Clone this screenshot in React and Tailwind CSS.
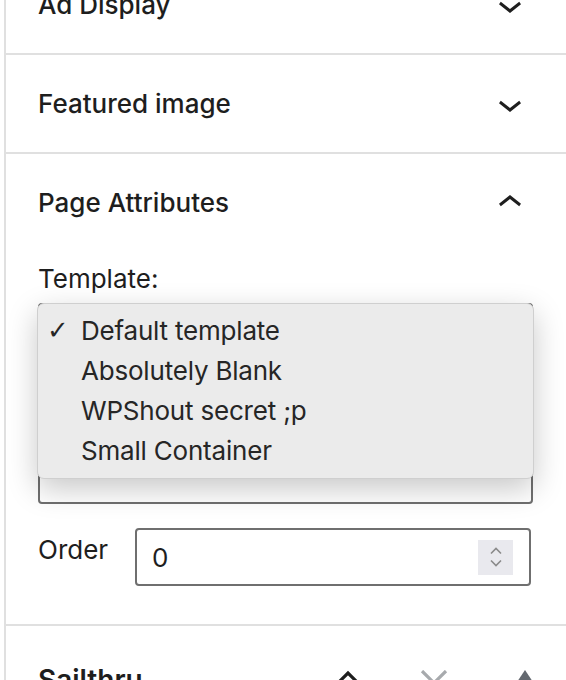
import React from "react";

function ChevronDown() {
  return (
    <svg viewBox="0 0 24 24" width="48" height="48" className="fill-[#1e1e1e]">
      <path d="M17.5 11.6L12 16l-5.5-4.4.9-1.2L12 14l4.6-3.6z" />
    </svg>
  );
}

function ChevronUp() {
  return (
    <svg viewBox="0 0 24 24" width="48" height="48" className="fill-[#1e1e1e]">
      <path d="M6.5 12.4L12 8l5.5 4.4-.9 1.2L12 10l-4.6 3.6-.9-1.2z" />
    </svg>
  );
}

function PanelHeader({ title, open }) {
  return (
    <div className="flex items-center justify-between h-[97px] pl-[32px] pr-[32px]">
      <h2 className="text-[26px] font-medium leading-none">{title}</h2>
      {open ? <ChevronUp /> : <ChevronDown />}
    </div>
  );
}

const templates = [
  "Default template",
  "Absolutely Blank",
  "WPShout secret ;p",
  "Small Container",
];

export default function App() {
  return (
    <div className="flex w-[566px] h-[680px] overflow-hidden bg-white text-[#1e1e1e] font-['Inter','Liberation_Sans',sans-serif]">
      <div className="w-[4px] shrink-0" />
      <div className="flex-1 flex flex-col border-l-2 border-[#e0e0e0] -mt-[44px]">
        <div className="border-b-2 border-[#e0e0e0]">
          <PanelHeader title="Ad Display" />
        </div>
        <div className="border-b-2 border-[#e0e0e0]">
          <PanelHeader title="Featured image" />
        </div>

        {/* page attributes, open */}
        <div className="border-b-2 border-[#e0e0e0]">
          <PanelHeader title="Page Attributes" open />
          <div className="px-[32px] pt-[12px] pb-[38px]">
            <label className="block text-[26px] leading-[32px]">Template:</label>
            <div className="relative mt-[8px] mr-[1px]">
              <div className="h-[201px] border-2 border-[#6f6f6f] rounded-[4px] bg-white" />
              {/* native popup menu */}
              <div className="absolute top-0 -left-[1px] -right-[1px] h-[176px] rounded-[7px] bg-[#ebebeb] border border-[#cfcfcf] shadow-[0_10px_30px_rgba(0,0,0,0.22)] pt-[6px] text-[#262626]">
                {templates.map((t, i) => (
                  <div key={t} className="flex items-center h-[40px] text-[26px] tracking-[-0.2px]">
                    <span className="w-[43px] pl-[9px] text-[26px] leading-none font-['DejaVu_Sans',sans-serif]">
                      {i === 0 ? "✓" : ""}
                    </span>
                    <span>{t}</span>
                  </div>
                ))}
              </div>
            </div>

            <div className="flex items-start mt-[24px]">
              <label className="w-[97px] mt-[6px] text-[26px] leading-[32px]">Order</label>
              <div className="flex items-center justify-between w-[396px] h-[58px] border-2 border-[#6f6f6f] rounded-[4px] pl-[15px] pr-[16px]">
                <span className="text-[26px] leading-none pt-[2px]">0</span>
                <div className="flex flex-col items-center justify-center gap-[4px] w-[35px] h-[35px] bg-[#e9e9ee]">
                  <svg width="12" height="8" viewBox="0 0 12 8" className="stroke-[#8a8a8a] fill-none">
                    <path d="M1 6.5L6 1.5l5 5" strokeWidth="1.6" />
                  </svg>
                  <svg width="12" height="8" viewBox="0 0 12 8" className="stroke-[#8a8a8a] fill-none">
                    <path d="M1 1.5L6 6.5l5-5" strokeWidth="1.6" />
                  </svg>
                </div>
              </div>
            </div>
          </div>
        </div>

        {/* sailthru metabox header */}
        <div className="flex items-start pl-[32px] pt-[37px]">
          <h2 className="text-[28px] font-semibold leading-[34px] w-[290px]">Sailthru</h2>
          <div className="flex items-start mt-[7px]">
            <svg width="26" height="16" viewBox="0 0 26 16" className="ml-[7px] stroke-[#1e1e1e] fill-none">
              <path d="M2 14L13 3l11 11" strokeWidth="3.2" />
            </svg>
            <svg width="28" height="16" viewBox="0 0 28 16" className="ml-[59px] stroke-[#a7aaad] fill-none">
              <path d="M2 1l12 12L26 1" strokeWidth="3.2" />
            </svg>
            <svg width="16" height="12" viewBox="0 0 16 12" className="ml-[69px] fill-[#646970]">
              <path d="M8 0l8 12H0z" />
            </svg>
          </div>
        </div>
      </div>
    </div>
  );
}
